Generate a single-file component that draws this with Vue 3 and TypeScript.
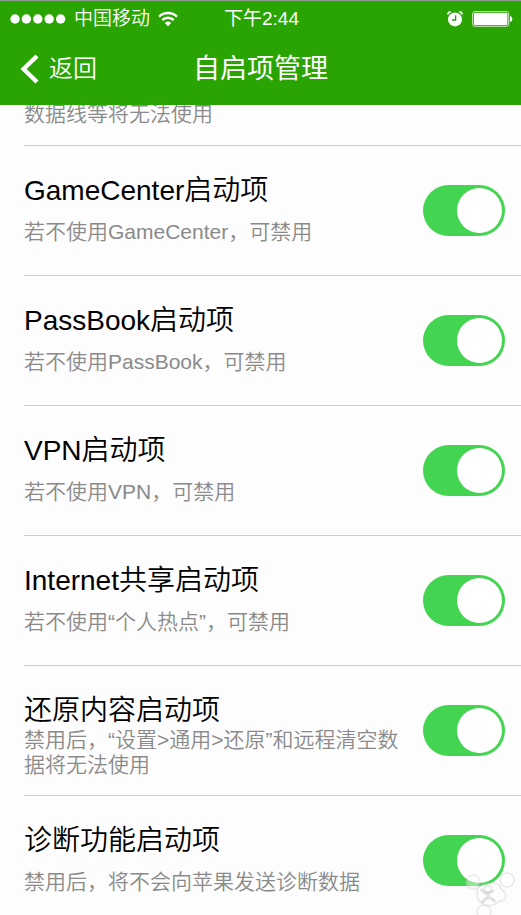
<script setup lang="ts">
import { ref } from 'vue'

interface LaunchItem {
  id: string
  name: string
  note: string
  enabled: boolean
}

const items = ref<LaunchItem[]>([
  { id: 'gamecenter', name: 'GameCenter启动项', note: '若不使用GameCenter，可禁用', enabled: true },
  { id: 'passbook', name: 'PassBook启动项', note: '若不使用PassBook，可禁用', enabled: true },
  { id: 'vpn', name: 'VPN启动项', note: '若不使用VPN，可禁用', enabled: true },
  { id: 'internet', name: 'Internet共享启动项', note: '若不使用“个人热点”，可禁用', enabled: true },
  { id: 'restore', name: '还原内容启动项', note: '禁用后，“设置>通用>还原”和远程清空数据将无法使用', enabled: true },
  { id: 'diagnose', name: '诊断功能启动项', note: '禁用后，将不会向苹果发送诊断数据', enabled: true },
])
</script>

<template>
  <div class="screen">
    <header class="top">
      <div class="status">
        <div class="carrier">
          <svg class="signal" width="56" height="12" viewBox="0 0 56 12" aria-hidden="true">
            <circle cx="5" cy="6" r="4.7" /><circle cx="16.4" cy="6" r="4.7" /><circle cx="27.8" cy="6" r="4.7" />
            <circle cx="39.2" cy="6" r="4.7" /><circle cx="50.6" cy="6" r="4.7" />
          </svg>
          <span>中国移动</span>
          <svg class="wifi" width="20" height="16" viewBox="0 0 20 16" aria-hidden="true">
            <path d="M1 5.6A13 13 0 0 1 19 5.6" />
            <path d="M4.3 9.1A8.2 8.2 0 0 1 15.7 9.1" />
            <path class="solid" d="M10 15.2L6.8 11.9A4.6 4.6 0 0 1 13.2 11.9Z" />
          </svg>
        </div>
        <time class="clock">下午2:44</time>
        <div class="indicators">
          <svg width="16" height="16" viewBox="0 0 16 16" aria-hidden="true">
            <circle cx="8" cy="8.4" r="7" fill="#fff" />
            <path d="M0.7 3.6Q1 1 3.8 0.8M15.3 3.6Q15 1 12.2 0.8" fill="none" stroke="#fff" stroke-width="1.4" />
            <path d="M8.6 4.3V9H5" fill="none" stroke="#2aa402" stroke-width="1.3" />
          </svg>
          <svg width="41" height="16" viewBox="0 0 41 16" aria-hidden="true">
            <rect x="0.7" y="0.7" width="36" height="14.6" rx="2.2" fill="none" stroke="#d4edcc" stroke-width="1" />
            <rect x="2" y="2" width="33.4" height="12" rx="1" fill="#fff" />
            <path d="M38 5Q40.4 5.4 40.4 8T38 11Z" fill="#fff" />
          </svg>
        </div>
      </div>
      <nav class="bar">
        <button class="back" type="button">
          <svg width="20" height="30" viewBox="0 0 20 30" aria-hidden="true">
            <path d="M17 2L3.6 15L17 28" fill="none" stroke="#fff" stroke-width="4.4" />
          </svg>
          <span>返回</span>
        </button>
        <h1>自启项管理</h1>
      </nav>
    </header>

    <main class="content">
      <ul class="list">
        <li class="peek"><p>数据线等将无法使用</p></li>
        <li v-for="item in items" :key="item.id" class="row">
          <div class="text">
            <label class="name" :for="item.id">{{ item.name }}</label>
            <p class="note">{{ item.note }}</p>
          </div>
          <input :id="item.id" v-model="item.enabled" class="toggle" type="checkbox" role="switch" />
        </li>
      </ul>
    </main>

    <svg class="mark" width="56" height="50" viewBox="0 0 56 50" aria-hidden="true">
      <g class="halo">
        <circle cx="13" cy="17" r="7" /><circle cx="47" cy="15" r="7" /><circle cx="24" cy="47" r="7" />
        <path d="M17 29Q17 19 28 18Q39 16 41 24Q48 29 45 34Q43 37 39 36Q33 42 25 40Q17 37 17 29Z" />
        <circle cx="28" cy="24" r="3.4" />
      </g>
      <path class="limb" d="M21 24Q27 32 34 25M28 29V32M22 38Q28 28 35 37" />
    </svg>
  </div>
</template>

<style>
body {
  margin: 0;
}
</style>

<style scoped>
.screen {
  position: relative;
  display: flex;
  flex-direction: column;
  height: 100vh;
  overflow: hidden;
  background: #fdfdfd;
  color: #000;
  font-family: "Liberation Sans", "Noto Sans CJK SC", sans-serif;
  font-weight: 350;
}
.top {
  flex: none;
  border-top: 1px solid #8c9c8c;
  background: #2aa402;
  color: #fff;
}
.status {
  display: grid;
  grid-template-columns: 1fr auto 1fr;
  align-items: center;
  height: 35px;
  padding: 0 8px 0 10px;
  font-size: 19px;
  line-height: 24px;
}
.carrier,
.indicators {
  display: flex;
  align-items: center;
}
.carrier {
  gap: 8px;
}
.signal {
  fill: #fff;
}
.wifi {
  fill: none;
  stroke: #fff;
  stroke-width: 2.4;
}
.wifi .solid {
  fill: #fff;
  stroke: none;
}
.clock {
  font-weight: 400;
}
.indicators {
  justify-content: flex-end;
  gap: 9px;
}
.bar {
  display: grid;
  grid-template-columns: 1fr auto 1fr;
  align-items: center;
  height: 69px;
  padding: 0 20px 3px;
  box-sizing: border-box;
}
.back {
  display: flex;
  align-items: center;
  justify-self: start;
  gap: 9px;
  padding: 0;
  border: 0;
  background: none;
  color: inherit;
  font: inherit;
  font-size: 24px;
  line-height: 32px;
}
h1 {
  margin: 0;
  font-size: 27px;
  font-weight: 400;
  line-height: 36px;
}
.content {
  flex: 1;
  min-height: 0;
  overflow-y: auto;
  scrollbar-width: none;
}
.list {
  margin: 0;
  padding: 0 0 0 24px;
  list-style: none;
}
.peek,
.row {
  display: flex;
  box-sizing: border-box;
  border-bottom: 1px solid #cdcdcd;
}
.peek {
  align-items: flex-end;
  height: 41px;
  padding-bottom: 19px;
  overflow: hidden;
}
.peek p,
.note {
  margin: 0;
  color: #8a8a8a;
  font-size: 21px;
  line-height: 25px;
}
.row {
  align-items: center;
  justify-content: space-between;
  gap: 8px;
  min-height: 130px;
  padding-right: 16px;
}
.text {
  flex: 1;
  padding: 19px 0 9px;
}
.name {
  display: block;
  font-size: 28px;
  line-height: 32px;
}
.note {
  display: flex;
  align-items: center;
  min-height: 50px;
}
.toggle {
  position: relative;
  flex: none;
  width: 82px;
  height: 51px;
  margin: 0;
  appearance: none;
  border-radius: 26px;
  background: #d8d8d8;
}
.toggle::before {
  content: "";
  position: absolute;
  top: 3px;
  left: 3px;
  width: 45px;
  height: 45px;
  border-radius: 50%;
  background: #fff;
}
.toggle:checked {
  background: #43d551;
}
.toggle:checked::before {
  left: 34px;
}
.mark {
  position: absolute;
  right: 5px;
  bottom: 0;
  pointer-events: none;
}
.halo {
  fill: rgba(255, 255, 255, 0.4);
  stroke: rgba(170, 170, 170, 0.25);
  stroke-width: 1.6;
}
.limb {
  fill: none;
  stroke: rgba(160, 160, 160, 0.3);
  stroke-width: 3;
}
</style>
